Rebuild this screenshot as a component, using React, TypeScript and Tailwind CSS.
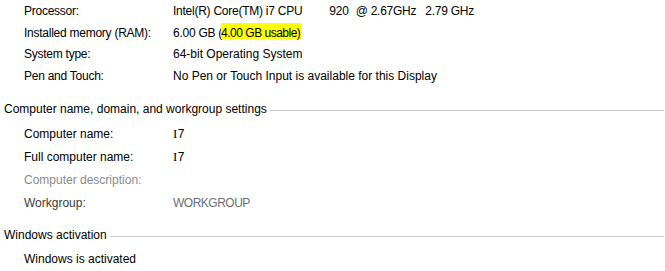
import React from "react";

const font = { fontFamily: '"Liberation Sans", Arial, sans-serif' };

function Row({
  label,
  value,
  h = "h-[22px]",
  labelClass = "text-black",
  valueClass = "text-black",
}: {
  label: string;
  value?: React.ReactNode;
  h?: string;
  labelClass?: string;
  valueClass?: string;
}) {
  return (
    <div className={`flex ${h} leading-[22px] items-center pl-[24px]`}>
      <div className={`w-[149px] shrink-0 whitespace-nowrap ${labelClass}`}>{label}</div>
      <div className={`whitespace-pre ${valueClass}`}>{value}</div>
    </div>
  );
}

function Header({ text }: { text: string }) {
  return (
    <div className="flex h-[22px] leading-[22px] items-center pl-[4px] pr-[1px]">
      <span className="text-black whitespace-nowrap">{text}</span>
      <div className="flex-1 ml-[3px] mt-[3px] border-t border-[#c9c9c9]" />
    </div>
  );
}

function I7() {
  return (
    <span>
      <span className="text-[13px] mr-[0.5px]" style={{ fontFamily: '"Liberation Serif", serif' }}>
        I
      </span>
      7
    </span>
  );
}

export default function App() {
  return (
    <div className="w-[665px] h-[271px] bg-white overflow-hidden text-[12px]" style={font}>
      <div className="flex flex-col">
        <Row
          label="Processor:"
          labelClass="text-black tracking-[-0.25px]"
          valueClass="text-black tracking-[-0.25px]"
          value={
            <span className="flex">
              <span>Intel(R) Core(TM) i7 CPU</span>
              <span className="ml-[27px]">920</span>
              <span className="ml-[7px]">@ 2.67GHz</span>
              <span className="ml-[9px]">2.79 GHz</span>
            </span>
          }
        />
        <Row
          label="Installed memory (RAM):"
          labelClass="text-black tracking-[-0.25px]"
          valueClass="text-black tracking-[-0.25px]"
          h="h-[21px]"
          value={
            <span>
              6.00 GB (
              <span className="inline-block bg-[#ffff00] leading-[12px] h-[16px] pt-[4px] -ml-[1px] pr-[1px] tracking-[-0.5px]">
                4.00 GB usable)
              </span>
            </span>
          }
        />
        <Row label="System type:" labelClass="text-black tracking-[-0.25px]" value="64-bit Operating System" />
        <Row
          label="Pen and Touch:"
          labelClass="text-black tracking-[-0.25px]"
          value="No Pen or Touch Input is available for this Display"
        />
      </div>
      <div className="mt-[11px]">
        <Header text="Computer name, domain, and workgroup settings" />
      </div>
      <div className="flex flex-col mt-[2px]">
        <Row h="h-[23px]" label="Computer name:" value={<I7 />} />
        <Row h="h-[23px]" label="Full computer name:" value={<I7 />} />
        <Row h="h-[23px]" label="Computer description:" labelClass="text-[#8a8a8a]" />
        <Row
          h="h-[23px]"
          label="Workgroup:"
          labelClass="text-[#3a3a3a]"
          valueClass="text-[#6e6e6e] tracking-[-0.5px]"
          value="WORKGROUP"
        />
      </div>
      <div className="mt-[10px]">
        <Header text="Windows activation" />
      </div>
      <div className="mt-[2px]">
        <Row label="Windows is activated" />
      </div>
    </div>
  );
}
